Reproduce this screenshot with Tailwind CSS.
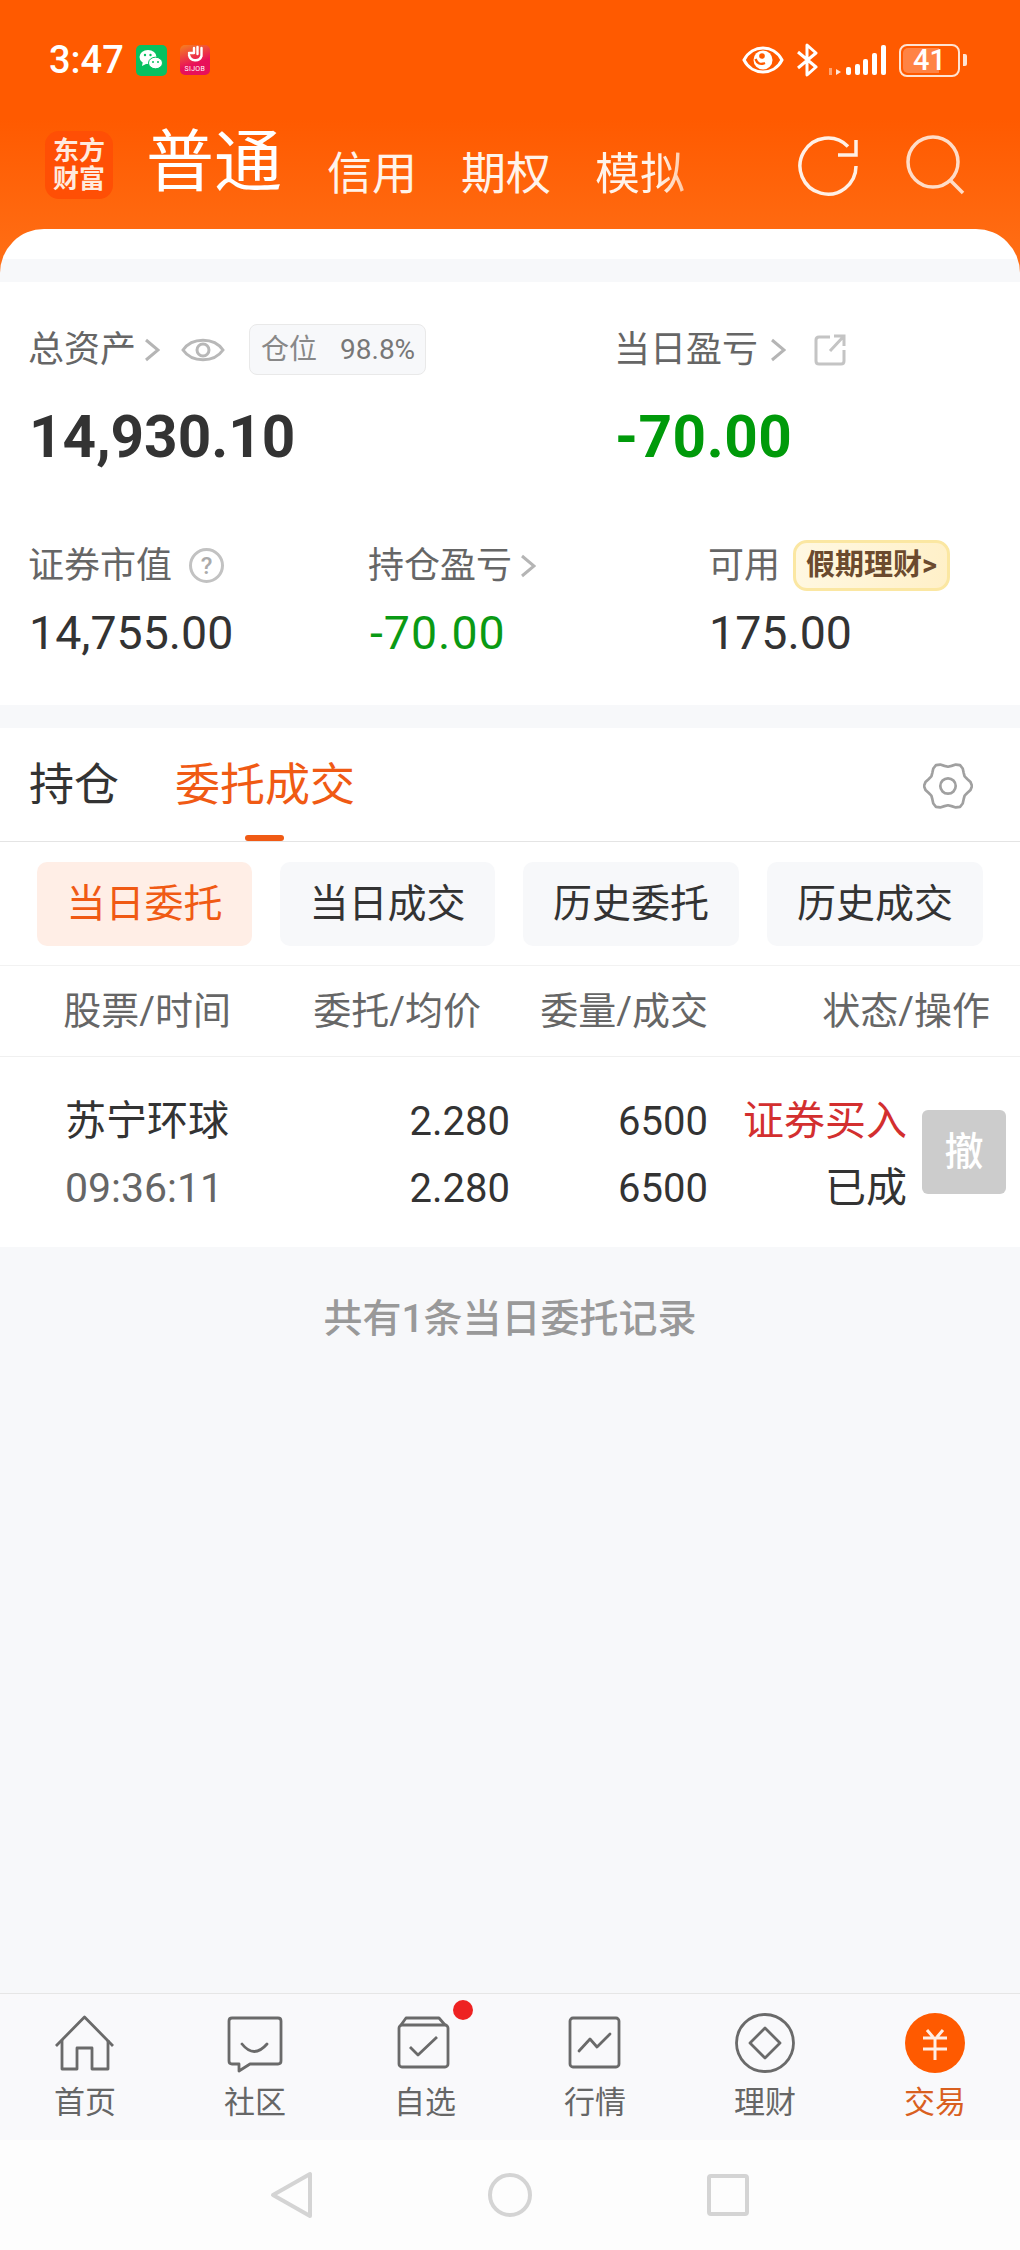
<!DOCTYPE html>
<html lang="zh-CN">

<head>
    <meta charset="UTF-8" />
    <meta name="viewport" content="width=device-width, initial-scale=1.0" />
    <title>交易</title>
    <script src="https://cdn.jsdelivr.net/npm/@tailwindcss/browser@4"></script>
</head>

<body class="w-[1020px] h-[2250px] overflow-hidden flex flex-col bg-[#f7f8fa] font-['Roboto','Noto_Sans_CJK_SC',sans-serif]">

    <!-- Orange header -->
    <header class="h-[282px] shrink-0 flex flex-col bg-[linear-gradient(180deg,#ff5a00_42%,#ff7118_100%)]">
        <!-- Status bar -->
        <div class="mt-[42px] h-[36px] flex items-center pl-[49px] pr-[53px] text-white">
            <span class="text-[38px] leading-none font-medium">3:47</span>
            <span class="ml-[12px] w-[31px] h-[31px] rounded-[5px] bg-[#07c160] flex items-center justify-center">
                <svg width="24" height="22" viewBox="0 0 24 22" fill="#fff">
                    <ellipse cx="9" cy="8" rx="8.5" ry="7" />
                    <path d="M4 12 L3 17 L9 14 Z" />
                    <ellipse cx="16.5" cy="14" rx="7" ry="5.8" stroke="#07c160" stroke-width="1" />
                    <circle cx="6" cy="6" r="1.2" fill="#07c160" />
                    <circle cx="11.5" cy="6" r="1.2" fill="#07c160" />
                    <circle cx="14" cy="13" r="1" fill="#07c160" />
                    <circle cx="19" cy="13" r="1" fill="#07c160" />
                </svg>
            </span>
            <span class="ml-[13px] w-[30px] h-[30px] rounded-[5px] bg-[linear-gradient(160deg,#f58220,#e8105a_60%)] flex flex-col items-center">
                <svg width="20" height="20" viewBox="0 0 20 20" fill="none" stroke="#fff" stroke-width="2.4" stroke-linecap="round">
                    <path d="M4 10 A6.5 6.5 0 0 0 16.5 11 V3" />
                    <path d="M12.5 9 V2 M9 8 V3 M4 8 H8" />
                </svg>
                <span class="text-[7px] leading-[8px] tracking-[0.3px]">SIJOB</span>
            </span>

            <div class="ml-auto flex items-center">
                <svg width="42" height="28" viewBox="0 0 42 28">
                    <path d="M2 14 C10 -2 32 -2 40 14 C32 30 10 30 2 14 Z" fill="none" stroke="#fff" stroke-width="3" />
                    <circle cx="21" cy="14" r="9.5" fill="#fff" />
                    <path d="M13.5 13 Q16 20 23 17" fill="none" stroke="#ff5a00" stroke-width="2.4" />
                    <circle cx="20" cy="10" r="2.8" fill="#ff5a00" />
                </svg>
                <svg class="ml-[12px]" width="22" height="34" viewBox="0 0 22 34" fill="none" stroke="#fff" stroke-width="3" stroke-linejoin="round">
                    <path d="M2 9 L20 24 L11 32 V2 L20 10 L2 25" />
                </svg>
                <svg class="ml-[10px]" width="59" height="32" viewBox="0 0 59 32" fill="#fff">
                    <rect x="1" y="24" width="3" height="7" opacity="0.45" />
                    <path d="M8 25 L13 28 L8 31 Z" opacity="0.85" />
                    <rect x="18" y="23" width="5" height="8" rx="2" />
                    <rect x="27" y="20" width="5" height="11" rx="2" />
                    <rect x="35" y="15" width="5" height="16" rx="2" />
                    <rect x="44" y="9" width="5" height="22" rx="2" />
                    <rect x="53" y="1" width="5" height="30" rx="2" />
                </svg>
                <div class="relative ml-[12px] w-[61px] h-[33px] rounded-[8px] border-2 border-[#ffe3d2] overflow-hidden flex items-center justify-center">
                    <div class="absolute left-[2px] top-[2px] bottom-[2px] w-[36px] rounded-l-[5px] bg-[#ff8344]"></div>
                    <span class="relative text-[29px] leading-none font-medium">41</span>
                </div>
                <div class="ml-[3px] w-[4px] h-[12px] rounded-r-[2px] bg-[#ffe3d2]"></div>
            </div>
        </div>

        <!-- Account type tabs -->
        <div class="mt-[53px] h-[68px] flex items-end pl-[45px] pr-[55px] text-white">
            <div class="w-[68px] h-[68px] rounded-[14px] bg-[#ff4f05] flex flex-col items-center justify-center font-bold text-[26px] leading-[28px] text-[#ffeadd]">
                <span>东方</span>
                <span>财富</span>
            </div>
            <span class="ml-[33px] mb-[2px] text-[68px] leading-none">普通</span>
            <span class="ml-[45px] mb-[2px] text-[45px] leading-none text-[#fff3ea]">信用</span>
            <span class="ml-[44px] mb-[2px] text-[45px] leading-none text-[#fff3ea]">期权</span>
            <span class="ml-[44px] mb-[2px] text-[45px] leading-none bg-[linear-gradient(90deg,#fff3ea_70%,#ffc7a4_100%)] bg-clip-text text-transparent">模拟</span>
            <div class="ml-auto flex gap-[47px] self-start">
                <svg width="60" height="60" viewBox="0 0 60 60" class="mt-[5px]" fill="none" stroke="#fff0e6" stroke-width="3.5">
                    <path d="M50 10.5 A28 28 0 1 0 58 30" />
                    <path d="M40 19 H58 V4" />
                </svg>
                <svg width="60" height="62" viewBox="0 0 60 62" class="mt-[2px]" fill="none" stroke="#ffdcc7" stroke-width="3.5">
                    <circle cx="28" cy="29" r="25" />
                    <path d="M45 47 L58 60" />
                </svg>
            </div>
        </div>

        <!-- Rounded sheet start -->
        <div class="mt-auto rounded-t-[44px] overflow-hidden">
            <div class="h-[30px] bg-white"></div>
            <div class="h-[23px] bg-[#f7f8fa]"></div>
        </div>
    </header>

    <!-- Asset summary -->
    <section class="h-[423px] shrink-0 bg-white pl-[28px] pt-[42px]">
        <div class="h-[51px] grid grid-cols-[586px_1fr] items-center">
            <div class="flex items-center">
                <span class="text-[36px] leading-none text-[#666]">总资产</span>
                <svg class="ml-[8px]" width="16" height="26" viewBox="0 0 16 26" fill="none" stroke="#b5b5b5" stroke-width="3"><path d="M2 3 L14 13 L2 23" /></svg>
                <svg class="ml-[21px]" width="44" height="30" viewBox="0 0 44 30" fill="none" stroke="#b8b8b8" stroke-width="3">
                    <path d="M2 15 C11 2 33 2 42 15 C33 28 11 28 2 15 Z" />
                    <circle cx="22" cy="15" r="6" />
                </svg>
                <div class="ml-[24px] w-[177px] h-[51px] rounded-[8px] border border-[#e9e9e9] bg-[#f7f8fa] flex items-center pl-[11px] text-[#888]">
                    <span class="text-[28px] leading-none">仓位</span>
                    <span class="ml-[23px] text-[28px] leading-none text-[#777]">98.8%</span>
                </div>
            </div>
            <div class="flex items-center">
                <span class="text-[36px] leading-none text-[#666]">当日盈亏</span>
                <svg class="ml-[12px]" width="16" height="26" viewBox="0 0 16 26" fill="none" stroke="#b5b5b5" stroke-width="3"><path d="M2 3 L14 13 L2 23" /></svg>
                <svg class="ml-[28px]" width="32" height="32" viewBox="0 0 32 32" fill="none" stroke="#c4c4c4" stroke-width="3">
                    <path d="M16 3 H5 Q2 3 2 6 V27 Q2 30 5 30 H27 Q30 30 30 27 V16" />
                    <path d="M16 17 L30 2 M20 2 H30 V12" />
                </svg>
            </div>
        </div>

        <div class="mt-[32px] h-[60px] grid grid-cols-[586px_1fr] items-center text-[58.5px] leading-[60px] font-bold">
            <span class="pl-[1px] text-[#333]">14,930.10</span>
            <span class="pl-[1px] tracking-[0.5px] text-[#009a0a]">-70.00</span>
        </div>

        <div class="mt-[73px] h-[51px] grid grid-cols-[340px_340px_1fr] items-center">
            <div class="flex items-center">
                <span class="text-[36px] leading-none text-[#666]">证券市值</span>
                <span class="ml-[17px] w-[35px] h-[35px] rounded-full border-[3px] border-[#c2c2c2] flex items-center justify-center text-[24px] leading-none text-[#aaa] font-medium">?</span>
            </div>
            <div class="flex items-center">
                <span class="text-[36px] leading-none text-[#666]">持仓盈亏</span>
                <svg class="ml-[8px]" width="16" height="26" viewBox="0 0 16 26" fill="none" stroke="#b5b5b5" stroke-width="3"><path d="M2 3 L14 13 L2 23" /></svg>
            </div>
            <div class="flex items-center">
                <span class="text-[36px] leading-none text-[#666]">可用</span>
                <span class="ml-[13px] w-[157px] h-[51px] rounded-[14px] border-[3px] border-[#fbe7a2] bg-[linear-gradient(100deg,#fff8e2,#fff0c8)] flex items-center justify-center text-[29px] leading-none font-bold text-[#6b4a2e] whitespace-nowrap">假期理财&gt;</span>
            </div>
        </div>

        <div class="mt-[17px] h-[50px] grid grid-cols-[340px_340px_1fr] items-center text-[46.5px] leading-[50px]">
            <span class="pl-[1px] text-[#333]">14,755.00</span>
            <span class="pl-[2px] tracking-[1px] text-[#0a9a14]">-70.00</span>
            <span class="pl-[1px] text-[#333]">175.00</span>
        </div>
    </section>

    <div class="h-[23px] shrink-0"></div>

    <!-- Orders -->
    <section class="shrink-0 bg-white">
        <div class="h-[114px] border-b border-[#e4e4e4] flex items-center pl-[29px] pr-[47px] pt-[2px] text-[45px] leading-none">
            <span class="text-[#333]">持仓</span>
            <div class="relative h-full flex items-center ml-[56px] text-[#f05a14]">
                <span>委托成交</span>
                <div class="absolute left-[70px] bottom-0 w-[39px] h-[6px] rounded-full bg-[#f05a14]"></div>
            </div>
            <svg class="ml-auto" width="50" height="50" viewBox="-1 -1 52 52" fill="none" stroke="#a0a0a0" stroke-width="2.8" stroke-linejoin="round">
                <polygon points="50,25 48.4,20.9 45,17.7 42.3,15 41.3,11.3 40.3,6.8 37.5,3.35 33.1,2.7 28.7,4.1 25,5 21.3,4.1 16.9,2.7 12.5,3.35 9.7,6.8 8.7,11.3 7.7,15 5,17.7 1.6,20.9 0,25 1.6,29.1 5,32.3 7.7,35 8.7,38.7 9.7,43.2 12.5,46.65 16.9,47.3 21.3,45.9 25,45 28.7,45.9 33.1,47.3 37.5,46.65 40.3,43.2 41.3,38.7 42.3,35 45,32.3 48.4,29.1" />
                <circle cx="25" cy="25" r="8" />
            </svg>
        </div>

        <div class="h-[124px] border-b border-[#f2f2f2] pl-[37px] pt-[20px] flex gap-[28px] text-[39px] leading-none">
            <button class="w-[215px] h-[84px] rounded-[10px] bg-[#ffeee6] text-[#f05a14]">当日委托</button>
            <button class="w-[215px] h-[84px] rounded-[10px] bg-[#f7f8fa] text-[#333]">当日成交</button>
            <button class="w-[216px] h-[84px] rounded-[10px] bg-[#f7f8fa] text-[#333]">历史委托</button>
            <button class="w-[216px] h-[84px] rounded-[10px] bg-[#f7f8fa] text-[#333]">历史成交</button>
        </div>

        <div class="h-[91px] border-b border-[#f0f0f0] grid grid-cols-[231px_250px_227px_282px] items-center text-right text-[38px] leading-none text-[#666]">
            <span>股票/时间</span>
            <span>委托/均价</span>
            <span>委量/成交</span>
            <span>状态/操作</span>
        </div>

        <div class="h-[190px] flex items-center text-[41px] leading-[67px] text-[#333]">
            <div class="flex pt-[6px]">
                <div class="w-[300px] pl-[65px]">
                    <div>苏宁环球</div>
                    <div class="text-[#666]">09:36:11</div>
                </div>
                <div class="w-[210px] text-right text-[40px]">
                    <div>2.280</div>
                    <div>2.280</div>
                </div>
                <div class="w-[198px] text-right text-[40px]">
                    <div>6500</div>
                    <div>6500</div>
                </div>
                <div class="w-[199px] text-right">
                    <div class="text-[#d32f2f]">证券买入</div>
                    <div>已成</div>
                </div>
            </div>
            <button class="ml-[15px] w-[84px] h-[84px] rounded-[6px] bg-[#ccc] text-white text-[39px] leading-none font-medium">撤</button>
        </div>
    </section>

    <div class="flex-1 pt-[47px] text-center text-[39px] leading-[50px] text-[#999] font-medium">共有1条当日委托记录</div>

    <!-- Bottom tab bar -->
    <nav class="h-[147px] shrink-0 border-t border-[#e6e6e6] bg-[#f9f9fb] grid grid-cols-6 text-[31px] leading-[30px] text-[#666]">
        <div class="flex flex-col items-center pt-[19px]">
            <svg width="60" height="60" viewBox="0 0 60 60" fill="none" stroke="#6a6a6a" stroke-width="2.8" stroke-linejoin="round">
                <path d="M1 33 L29.5 4 L58 33" />
                <path d="M7 27 V56 H22 V35 H37 V56 H53 V27" />
            </svg>
            <span class="mt-[15px]">首页</span>
        </div>
        <div class="flex flex-col items-center pt-[19px]">
            <svg width="60" height="60" viewBox="0 0 60 60" fill="none" stroke="#6a6a6a" stroke-width="2.8" stroke-linejoin="round">
                <path d="M7 5 H53 Q56 5 56 8 V48 Q56 51 53 51 H25 L14 58 V51 H7 Q4 51 4 48 V8 Q4 5 7 5 Z" />
                <path d="M17 31 Q29 46 42 31" stroke-linecap="round" />
            </svg>
            <span class="mt-[15px]">社区</span>
        </div>
        <div class="relative flex flex-col items-center pt-[19px]">
            <svg width="60" height="60" viewBox="0 0 60 60" fill="none" stroke="#6a6a6a" stroke-width="2.8" stroke-linejoin="round">
                <path d="M6 12 L11 5 H44 L50 12" />
                <rect x="4" y="12" width="49" height="42" rx="3" />
                <path d="M15 34 L23 42 L42 24" />
            </svg>
            <div class="absolute left-[113px] top-[6px] w-[20px] h-[20px] rounded-full bg-[#ee2222]"></div>
            <span class="mt-[15px]">自选</span>
        </div>
        <div class="flex flex-col items-center pt-[19px]">
            <svg width="60" height="60" viewBox="0 0 60 60" fill="none" stroke="#6a6a6a" stroke-width="2.8" stroke-linejoin="round">
                <rect x="5" y="5" width="49" height="49" rx="3" />
                <path d="M14 38 L25 26 L32 34 L45 21" stroke-linecap="round" />
            </svg>
            <span class="mt-[15px]">行情</span>
        </div>
        <div class="flex flex-col items-center pt-[19px]">
            <svg width="60" height="60" viewBox="0 0 60 60" fill="none" stroke="#6a6a6a" stroke-width="2.8" stroke-linejoin="round">
                <circle cx="30" cy="30" r="28.5" />
                <path d="M30 15 L45 30 L30 45 L15 30 Z" />
            </svg>
            <span class="mt-[15px]">理财</span>
        </div>
        <div class="flex flex-col items-center pt-[19px]">
            <svg width="60" height="60" viewBox="0 0 60 60" fill="none">
                <circle cx="30" cy="30" r="30" fill="#ff5a00" />
                <path d="M22 17 L28 24 M38 17 L32 24 M18 25 H42 M18 36 H42 M30 24 V47" stroke="#ffeee4" stroke-width="3" />
            </svg>
            <span class="mt-[15px] text-[#d9601f]">交易</span>
        </div>
    </nav>

    <!-- System nav bar -->
    <div class="h-[110px] shrink-0 bg-[#fdfdfd] flex items-center justify-center gap-[174px]">
        <svg width="44" height="48" viewBox="0 0 44 48" fill="none" stroke="#d4d4d4" stroke-width="4" stroke-linejoin="round">
            <path d="M3 24 L40 3 V45 Z" />
        </svg>
        <svg width="44" height="44" viewBox="0 0 44 44" fill="none" stroke="#d4d4d4" stroke-width="4">
            <circle cx="22" cy="22" r="20" />
        </svg>
        <svg width="44" height="44" viewBox="0 0 44 44" fill="none" stroke="#d4d4d4" stroke-width="4" stroke-linejoin="round">
            <rect x="3" y="3" width="38" height="38" rx="2" />
        </svg>
    </div>
</body>

</html>
